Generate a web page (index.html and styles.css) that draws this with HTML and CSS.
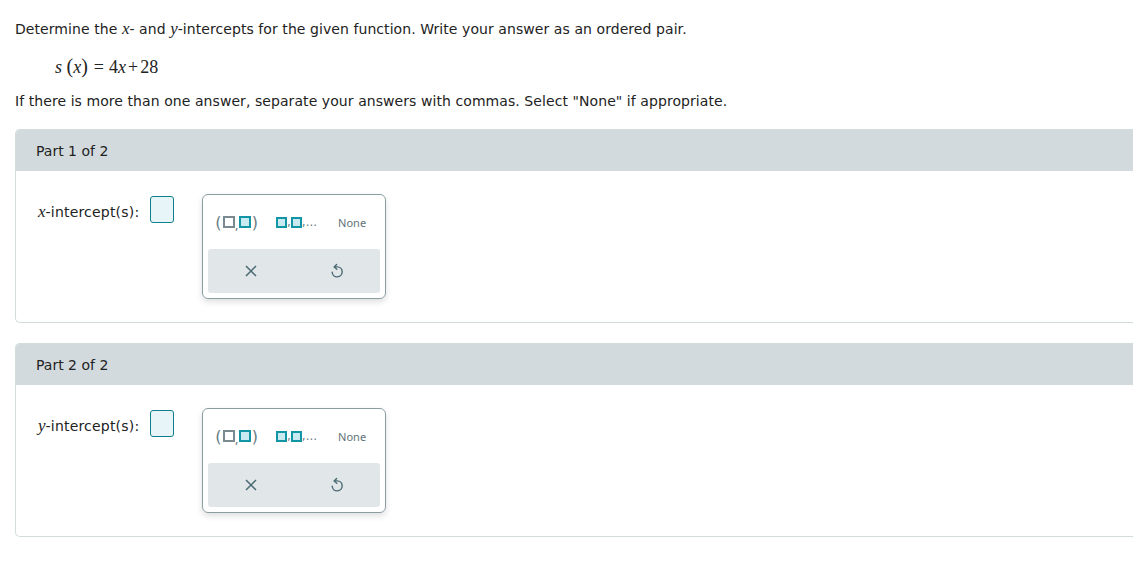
FILE: index.html
```html
<!DOCTYPE html>
<html>
<head>
<meta charset="utf-8">
<link rel="stylesheet" href="styles.css">
</head>
<body>
<div class="page">
  <p class="line first">Determine the <i class="m">x</i>- and <i class="m">y</i>-intercepts for the given function. Write your answer as an ordered pair.</p>
  <p class="eq"><i>s</i> <span class="par">(</span><i>x</i><span class="par">)</span><span class="op">=</span>4<i>x</i><span class="pl">+</span>28</p>
  <p class="line">If there is more than one answer, separate your answers with commas. Select "None" if appropriate.</p>

  <section class="panel">
    <div class="phead">Part 1 of 2</div>
    <div class="pbody">
      <div class="label"><i class="m">x</i>-intercept(s):</div>
      <div class="inbox"></div>
      <div class="pop">
        <div class="toprow">
          <div class="opt pair"><span class="pn">(</span><span class="sq grey"></span><span class="cm">,</span><span class="sq teal"></span><span class="pn">)</span></div>
          <div class="opt list"><span class="sq teal"></span><span class="cm">,</span><span class="sq teal"></span><span class="cm">,...</span></div>
          <div class="opt none">None</div>
        </div>
        <div class="botrow">
          <svg class="ic" width="16" height="16" viewBox="0 0 16 16"><path d="M3 3 L13 13 M13 3 L3 13" stroke="#4a6a73" stroke-width="1.5" fill="none"/></svg>
          <svg class="ic" width="16" height="16" viewBox="0 0 16 16"><path d="M7.6 1.4 L5.2 3.9 L7.8 6.3" stroke="#4a6a73" stroke-width="1.4" fill="none" stroke-linecap="round" stroke-linejoin="round"/><path d="M5.4 3.9 H8.2 A5 5 0 1 1 3.2 9.2" stroke="#4a6a73" stroke-width="1.4" fill="none" stroke-linecap="round"/></svg>
        </div>
      </div>
    </div>
  </section>

  <section class="panel">
    <div class="phead">Part 2 of 2</div>
    <div class="pbody">
      <div class="label"><i class="m">y</i>-intercept(s):</div>
      <div class="inbox"></div>
      <div class="pop">
        <div class="toprow">
          <div class="opt pair"><span class="pn">(</span><span class="sq grey"></span><span class="cm">,</span><span class="sq teal"></span><span class="pn">)</span></div>
          <div class="opt list"><span class="sq teal"></span><span class="cm">,</span><span class="sq teal"></span><span class="cm">,...</span></div>
          <div class="opt none">None</div>
        </div>
        <div class="botrow">
          <svg class="ic" width="16" height="16" viewBox="0 0 16 16"><path d="M3 3 L13 13 M13 3 L3 13" stroke="#4a6a73" stroke-width="1.5" fill="none"/></svg>
          <svg class="ic" width="16" height="16" viewBox="0 0 16 16"><path d="M7.6 1.4 L5.2 3.9 L7.8 6.3" stroke="#4a6a73" stroke-width="1.4" fill="none" stroke-linecap="round" stroke-linejoin="round"/><path d="M5.4 3.9 H8.2 A5 5 0 1 1 3.2 9.2" stroke="#4a6a73" stroke-width="1.4" fill="none" stroke-linecap="round"/></svg>
        </div>
      </div>
    </div>
  </section>
</div>
</body>
</html>
```

FILE: styles.css
```css
html, body { margin: 0; padding: 0; background: #fff; overflow: hidden; }
body { font-family: "DejaVu Sans", Verdana, sans-serif; font-size: 14px; color: #222; }
.page { padding: 19px 0 0 15px; width: 1140px; }
.line { margin: 0; line-height: 20px; letter-spacing: 0.07px; }
.m { font-family: "Liberation Serif", serif; font-size: 17px; font-style: italic; letter-spacing: 0; }
.eq { margin: 17px 0 14px 40px; font-family: "Liberation Serif", serif; font-size: 18px; line-height: 20px; }
.eq .par { font-size: 20px; }
.eq .op { margin: 0 5px 0 6px; }
.eq .pl { margin: 0 2px; }
.panel { border: 1px solid #d3dcdc; border-right: none; border-radius: 5px 0 0 5px; margin-top: 18px; height: 192px; overflow: hidden; }
.panel + .panel { margin-top: 20px; }
.phead { background: #d3dadd; height: 41px; line-height: 42px; padding-left: 20px; }
.pbody { display: flex; align-items: flex-start; padding: 23px 0 0 22px; }
.label { margin-top: 8px; letter-spacing: 0.2px; }
.inbox { width: 22px; height: 25px; border: 1px solid #0f7f8e; border-radius: 3px; background: #e8f5f8; margin: 2px 0 0 11px; }
.pop { margin-left: 28px; border: 1px solid #8a9da2; border-radius: 6px; box-shadow: 0 3px 6px rgba(0,0,0,0.13); padding: 0 5px 5px; box-sizing: border-box; width: 184px; height: 105px; display: flex; flex-direction: column; }
.toprow { display: flex; align-items: center; height: 54px; }
.opt { display: flex; align-items: center; color: #5f7379; }
.pair { margin-left: 7px; }
.pn { font-family: "DejaVu Sans", sans-serif; font-size: 16px; color: #6a7d83; }
.sq { display: inline-block; box-sizing: border-box; }
.sq.grey { border: 2px solid #7b8a90; background: #fff; width: 12px; height: 12px; margin-left: 1px; }
.sq.teal { border: 2px solid #1296a6; background: #c9eaf0; width: 12px; height: 12px; }
.pair .sq.teal { margin-right: 1px; }
.cm { font-size: 12px; color: #6a7d83; line-height: 12px; align-self: flex-end; margin-bottom: 1px; }
.pair .cm { font-size: 13px; margin: 0; }
.list { margin-left: 18px; }
.list .sq.teal { width: 11px; height: 11px; }
.none { margin-left: 21px; font-family: "Noto Sans", "Open Sans", sans-serif; font-size: 11px; color: #5f7379; }
.botrow { flex: 1; background: #e1e6e8; border-radius: 3px; display: flex; justify-content: space-around; align-items: center; }
.botrow .ic:first-child { margin-left: 0; }
```
